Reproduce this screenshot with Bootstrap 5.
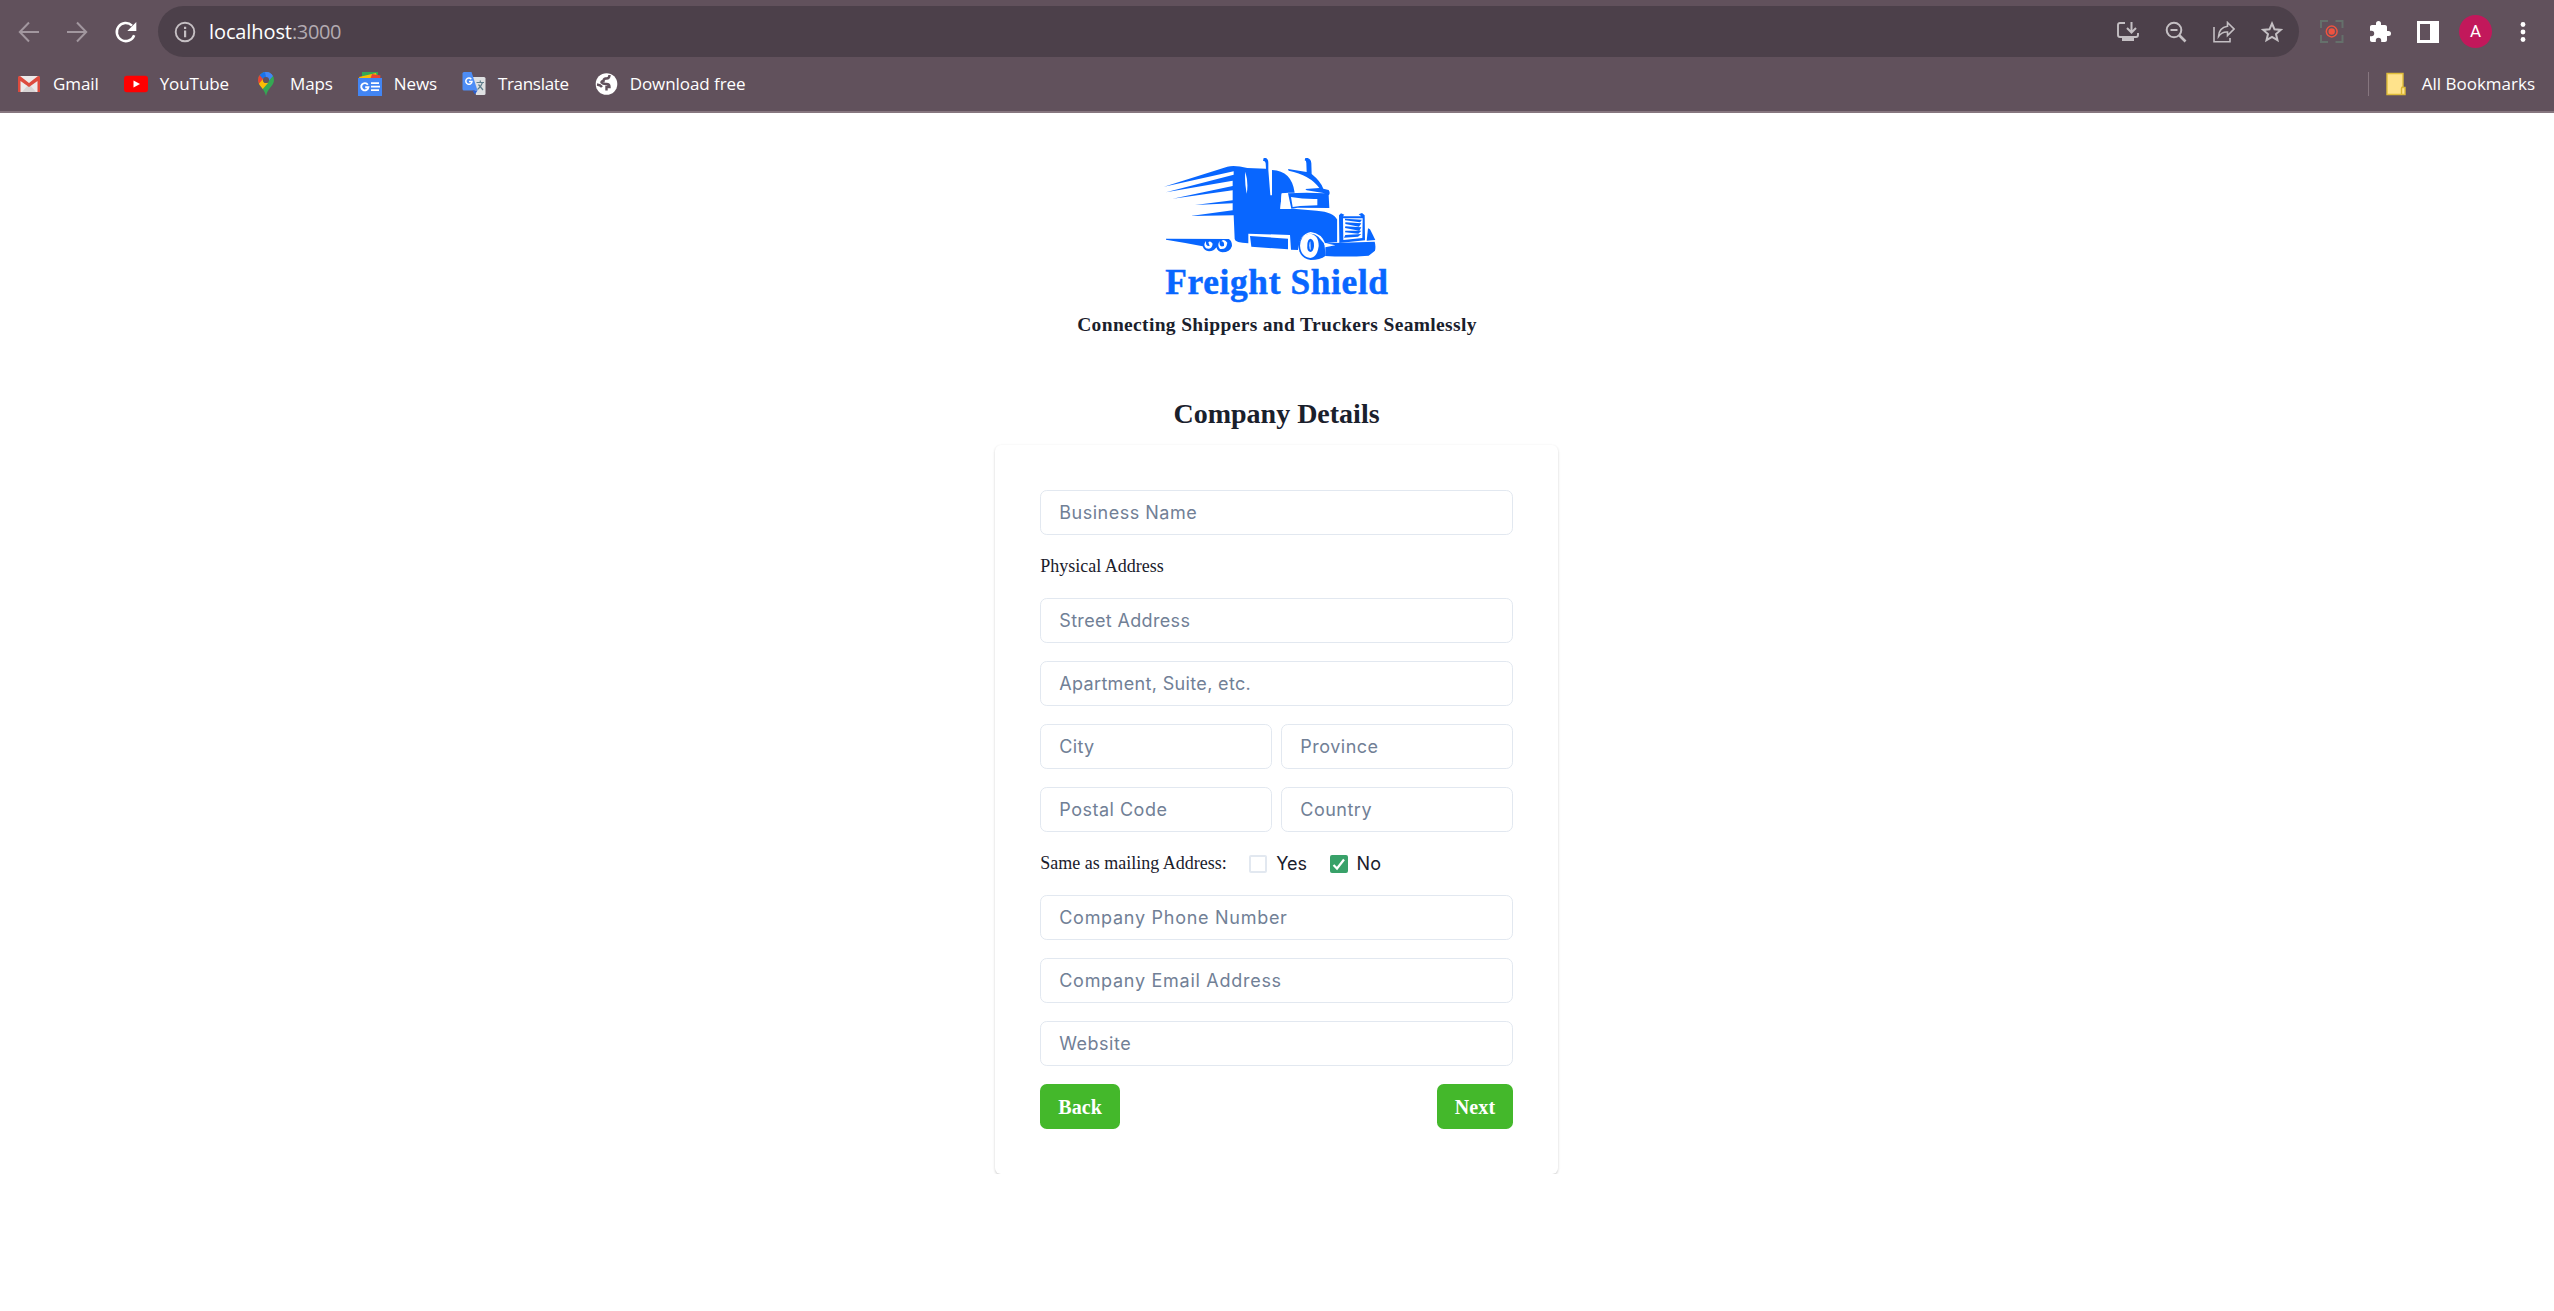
<!DOCTYPE html>
<html lang="en">
<head>
<meta charset="utf-8">
<title>Freight Shield</title>
<link href="https://cdn.jsdelivr.net/npm/bootstrap@5.3.0/dist/css/bootstrap.min.css" rel="stylesheet">
<style>
body{font-family:Inter,sans-serif;color:#1a202c;font-size:18px;line-height:27px;background:#fff}
svg{display:block;flex:none}
.chrome-top{height:113px;background:#61515c;border-bottom:2px solid #86767f;color:#fff;font-family:"Open Sans",sans-serif}
.tool-row{height:63px;padding-left:18px}
.nav-fwd{margin-left:26px}
.nav-reload{margin-left:26px}
.omni{height:51px;width:2141px;border-radius:26px;background:#4c404a;padding:0 16px 0 16px;margin-left:20px}
.omni-icons{gap:26px}
.url-txt{font-size:20px;color:#b3abb1;margin-left:13px;letter-spacing:-.35px}
.url-txt b{font-weight:400;color:#fff;letter-spacing:-.1px}
.ext-icons{margin-left:20px;gap:24px}
.avatar{width:33px;height:33px;background:#c2185b;font-size:17px;font-family:Roboto,sans-serif;margin:0 -5px}
.mark-row{height:41px;padding:0 19px 0 17px;font-size:17px;gap:24.8px}
.mark-item{gap:12px}
.mark-item span{letter-spacing:-.06px}
.mark-item .tight{letter-spacing:-.3px}
.bar-sep{width:1px;height:24px;background:#86767f;margin-right:1px}
.serif{font-family:"Liberation Serif",serif}
.logo-box{padding-top:27px;margin-left:-1px}
.tagline{font-size:19.5px;font-weight:700;line-height:24px;margin:3px 0 59px;letter-spacing:.34px}
.page-title{font-size:28px;font-weight:700;line-height:36px;margin:0 0 13px -1px}
.form-box{width:563px;padding:45px;margin-left:-.5px;border-radius:6px;background:#fff;box-shadow:0 1px 3px rgba(0,0,0,.12),0 1.5px 2px rgba(0,0,0,.08);gap:18px}
.form-box .form-control{height:45px;border:1px solid #e2e8f0;border-radius:6.75px;padding:0 18px;font-size:18px;color:#1a202c;letter-spacing:.34px}
.form-box .form-control::placeholder{color:#718096;opacity:1}
.form-box .form-control.track-1{letter-spacing:.5px}
.form-box .form-control.track-2{letter-spacing:.72px}
.pair{gap:9px}
.tick{width:18px;height:18px;border:2px solid #e2e8f0;border-radius:2px}
.tick.on{background:#38a169;border-color:#38a169}
.choice{gap:9px;margin-left:22.5px}
.form-box .go{height:45px;background:#44b82b;color:#fff;border:0;border-radius:6.75px;padding:0 18px;font-weight:700;font-size:20px;letter-spacing:.12px}
</style>
</head>
<body>
<header class="chrome-top">
 <div class="tool-row d-flex align-items-center">
  <svg width="22" height="22" viewBox="0 0 22 22" fill="none" stroke="#a2979f" stroke-width="2"><path d="M21 11H2.5M11 1.5L1.8 11L11 20.5"/></svg>
  <svg class="nav-fwd" width="22" height="22" viewBox="0 0 22 22" fill="none" stroke="#a2979f" stroke-width="2"><path d="M1 11H19.5M11 1.5L20.2 11L11 20.5"/></svg>
  <svg class="nav-reload" width="24" height="24" viewBox="0 0 24 24"><path d="M20.2 15.2A9 9 0 1 1 18 5.6" fill="none" stroke="#fff" stroke-width="2.5"/><path d="M22.3 2v9h-9z" fill="#fff"/></svg>
  <div class="omni d-flex align-items-center justify-content-between">
   <div class="d-flex align-items-center">
    <svg width="22" height="22" viewBox="0 0 22 22"><circle cx="11" cy="11" r="9.3" fill="none" stroke="#c5bfc3" stroke-width="1.9"/><path d="M10 5.7h2.2v2.2H10zM10 9.6h2.2v6.6H10z" fill="#c5bfc3"/></svg>
    <span class="url-txt"><b>localhost</b>:3000</span>
   </div>
   <div class="omni-icons d-flex align-items-center">
    <svg width="22" height="22" viewBox="0 0 22 22"><path d="M8 2H3Q1 2 1 4V14Q1 16 3 16H19Q21 16 21 14V12" fill="none" stroke="#c4bfc3" stroke-width="1.9"/><path d="M14.500 1V11M10 7L14.500 11.500L19 7" fill="none" stroke="#c4bfc3" stroke-width="2"/><path d="M5 16h12v4H5z" fill="#c4bfc3"/></svg>
    <svg width="22" height="22" viewBox="0 0 22 22" fill="none" stroke="#c4bfc3" stroke-width="2"><circle cx="9" cy="9" r="7.300"/><path d="M5.500 9H12.500"/><path d="M14 14L20.500 20.500" stroke-width="2.600"/></svg>
    <svg width="22" height="22" viewBox="0 0 22 22" fill="none" stroke="#c4bfc3" stroke-width="1.600"><path d="M1 6V20.700H17V17"/><path d="M14.500 1.500L21 8L14.500 14.500V11Q9 10.500 5.500 15.500Q6 6.500 14.500 5.200Z"/></svg>
    <svg width="22" height="22" viewBox="0 0 22 22" fill="none" stroke="#c4bfc3" stroke-width="2"><path d="M11 2.500L13.500 8.300L19.800 8.900L15 13L16.500 19.200L11 16L5.500 19.200L7 13L2.200 8.900L8.500 8.300Z"/></svg>
   </div>
  </div>
  <div class="ext-icons d-flex align-items-center">
   <svg width="25" height="25" viewBox="0 0 25 25" fill="none"><path d="M2 9V2H9M16.500 2H23.500V9M23.500 16V23H16.500M9 23H2V16" stroke="#65706b" stroke-width="2"/><circle cx="12.700" cy="12.500" r="5.400" stroke="#ee5340" stroke-width="1.500"/><circle cx="12.700" cy="12.500" r="3.200" fill="#ee5340"/></svg>
   <svg width="24" height="24" viewBox="0 0 24 24" fill="#fff"><path d="M20.500 11H19V7c0-1.100-.9-2-2-2h-4V3.500a2.500 2.500 0 0 0-5 0V5H4c-1.100 0-2 .9-2 2v3.800h1.500a2.700 2.700 0 0 1 0 5.400H2V20c0 1.100.9 2 2 2h3.800v-1.500a2.700 2.700 0 0 1 5.400 0V22H17c1.100 0 2-.9 2-2v-4h1.500a2.500 2.500 0 0 0 0-5z"/></svg>
   <svg width="24" height="24" viewBox="0 0 24 24"><path d="M1 1H23V23H1ZM4 4V20H14V4Z" fill="#fff" fill-rule="evenodd"/></svg>
   <span class="avatar rounded-circle d-flex align-items-center justify-content-center">A</span>
   <svg width="24" height="24" viewBox="0 0 24 24" fill="#fff"><circle cx="12" cy="4.500" r="2.400"/><circle cx="12" cy="12" r="2.400"/><circle cx="12" cy="19.500" r="2.400"/></svg>
  </div>
 </div>
 <div class="mark-row d-flex align-items-center">
  <div class="mark-item d-flex align-items-center">
   <svg width="24" height="24" viewBox="0 0 24 24"><path d="M2 4H22V20H2Z" fill="#eceaea"/><path d="M5 20L12 12L19 20Z" fill="#d8d4d4"/><path d="M1 5Q1 4 3 4L12 11L21 4Q23 4 23 5V20H20.500V9L12 15L3.500 9V20H1Z" fill="#dd4b3e"/></svg>
   <span>Gmail</span>
  </div>
  <div class="mark-item d-flex align-items-center">
   <svg width="24" height="24" viewBox="0 0 24 24"><rect y="3.800" width="24" height="16.500" rx="3" fill="#f00"/><path d="M9.500 8.500L16 12L9.500 15.500Z" fill="#fff"/></svg>
   <span>YouTube</span>
  </div>
  <div class="mark-item d-flex align-items-center">
   <svg width="24" height="24" viewBox="0 0 24 24"><defs><clipPath id="pin"><path d="M12 0A8 8 0 0 1 20 8C20 14 14 15.500 12 24C10 15.500 4 14 4 8A8 8 0 0 1 12 0Z"/></clipPath></defs><g clip-path="url(#pin)"><path d="M0 0H24V24H0Z" fill="#34a853"/><path d="M9 0H24L11 9Z" fill="#4285f4"/><path d="M10 0H16L19 4L5 20L12 9Z" fill="#4285f4"/><path d="M0 0H5L13 7L5 14H0Z" fill="#ea4335"/><path d="M5 0H11L12 5L9 7L5.500 3Z" fill="#1a73e8"/><path d="M3 14L10 6L14 11L7 19Z" fill="#fbbc04"/></g><circle cx="12" cy="8" r="3.100" fill="#61515c"/></svg>
   <span>Maps</span>
  </div>
  <div class="mark-item d-flex align-items-center">
   <svg width="24" height="24" viewBox="0 0 24 24"><path d="M4 0H20V8H4Z" fill="#34a853"/><path d="M1 5L18 1L20 8H2Z" fill="#fbbc04"/><path d="M14 2L22.500 3.500L22 8H12Z" fill="#ea4335"/><path d="M0 6H24V24H0Z" fill="#4285f4"/><path d="M9.800 12.700A3.600 3.600 0 1 0 10.400 15.300H7.200" fill="none" stroke="#fff" stroke-width="1.900"/><path d="M13 11.200H21M13 14.700H22M13 18.200H21" stroke="#fff" stroke-width="1.700"/></svg>
   <span>News</span>
  </div>
  <div class="mark-item d-flex align-items-center">
   <svg width="24" height="24" viewBox="0 0 24 24"><path d="M9 5H22Q23.500 5 23.500 6.500V21.500Q23.500 23 22 23H14Z" fill="#dfe1e3"/><path d="M14.500 10.500H22M18.300 8.500V10.500M20.500 10.500Q19 15 15.500 17.500M16.500 12.500L21 18" fill="none" stroke="#5f7e8c" stroke-width="1.200"/><path d="M2 0H9.500L15.500 18.500H2Q.5 18.500 .5 17V1.500Q.5 0 2 0Z" fill="#4d8df6"/><path d="M10.500 18.500H15.500L13 22.500Z" fill="#2a5fd0"/><path d="M9.300 7.200A3.100 3.100 0 1 0 10 9.500H7" fill="none" stroke="#fff" stroke-width="1.500"/></svg>
   <span class="tight">Translate</span>
  </div>
  <div class="mark-item d-flex align-items-center">
   <svg width="24" height="24" viewBox="0 0 24 24"><circle cx="12.500" cy="12" r="10.800" fill="#fff"/><path d="M15.500 3Q15.500 6.500 12.500 6.500H11.500Q9.500 7 9.500 9Q7.500 9 7.500 10.500Q9 12.200 12.500 12Q15.500 12 15.500 15H12.500V18.500M3 12.500Q6.500 13 8 15" fill="none" stroke="#61515c" stroke-width="2.400"/></svg>
   <span>Download free</span>
  </div>
  <div class="d-flex align-items-center ms-auto">
   <span class="bar-sep"></span>
   <svg class="ms-3" width="20" height="24" viewBox="0 0 20 24"><path d="M1 1.500H17V15.500H19V22.500H1Z" fill="#ffe38c" stroke="#dfbd3a" stroke-width="1.400"/><path d="M15.500 22V16.500Q15.500 15 17 15" fill="none" stroke="#d9b52f" stroke-width="1.400"/></svg>
   <span class="ms-3">All Bookmarks</span>
  </div>
 </div>
</header>

<main class="d-flex flex-column align-items-center">
 <div class="logo-box">
  <svg width="274" height="170" viewBox="0 0 822 510" fill="#0866ff">
   <path d="M72 140L262 80Q285 75 322 84L378 86L377 70Q377 63 369 62L371 54L378 54Q385 57 385 68V90L391 166H396V90Q455 92 464 158L446 158L425 160L421 207H452L460 206L530 212Q582 216 592 240V308L556 311Q545 280 512 276Q478 282 474 330L453 329L450 285L325 281V310Q285 308 284 297L281 226L152 228L278 211V190L165 195L278 181V151L98 176L278 138V122L78 157L281 104V94Z"/>
   <path d="M316 95Q326 128 320 161Q313 125 316 95ZM425 161L446 160Q452 185 452 206L421 207Z" fill="#fff"/>
   <path d="M444 87L500 96L499 69Q499 62 494 61L496 54L503 54Q513 57 514 70L515 102Q542 124 550 146L566 150Q572 160 566 166L568 204L473 203L454 206L444 160L500 158L555 160L500 151L496 147L538 144Q510 105 446 92Z"/>
   <path d="M453 171Q490 178 532 177V196L480 198L458 201Z" fill="#fff"/>
   <path d="M330 288L444 296V328L334 320Z"/>
   <path d="M78 296L266 297Q276 302 276 318Q270 337 247 337Q233 335 229 322Q222 334 207 334Q192 332 188 319Q130 307 78 299Z"/>
   <path d="M198 303Q188 315 198 325Q216 330 218 311Q210 300 205 307L209 318Q196 320 198 303ZM239 303Q230 316 240 327Q259 330 262 308Q252 295 244 304Q254 304 252 318Q236 324 239 303Z" fill="#fff"/>
   <path d="M474 312L478 334Q486 356 512 360Q540 360 557 347L553 311L535 290Q510 270 482 297Z"/>
   <path d="M508 281Q536 282 536 318Q532 352 511 354Q482 350 480 317Q482 283 508 281Z" fill="#fff"/>
   <path d="M511 296Q523 298 522 318Q521 335 511 336Q500 334 502 316Q502 298 511 296Z"/>
   <path d="M511 304L512 330Q508 327 508 317Q508 306 511 304Z" fill="#fff"/>
   <path d="M597 226L603 220L613 224L609 229H664L656 223L666 219L674 226L675 301L598 309Z"/>
   <path d="M609 235H668L667 294L610 300Z" fill="#fff"/>
   <path d="M615 236L666 239L660 247L615 241ZM616 247L664 250L657 260L616 252ZM616 259L664 262L658 272L615 264ZM616 272L664 272L655 281L615 277ZM616 285L664 282L654 290L612 293Z"/>
   <path d="M594 240V308L552 312" fill="none" stroke="#fff" stroke-width="4"/>
   <path d="M558 310L704 305Q708 318 705 332L686 347Q620 352 556 348V322L586 316Z"/>
   <path d="M684 265L690 268L706 300L680 302Z"/>
   <text x="76" y="461" stroke="#0866ff" stroke-width="1.500" font-family="'Liberation Serif',serif" font-weight="700" font-size="106" textLength="668" lengthAdjust="spacing">Freight Shield</text>
  </svg>
 </div>
 <p class="serif tagline">Connecting Shippers and Truckers Seamlessly</p>
 <h1 class="serif page-title">Company Details</h1>
 <form class="form-box d-flex flex-column">
  <input class="form-control track-1" placeholder="Business Name">
  <div class="serif">Physical Address</div>
  <input class="form-control" placeholder="Street Address">
  <input class="form-control" placeholder="Apartment, Suite, etc.">
  <div class="pair d-flex"><input class="form-control" placeholder="City"><input class="form-control track-1" placeholder="Province"></div>
  <div class="pair d-flex"><input class="form-control track-1" placeholder="Postal Code"><input class="form-control track-1" placeholder="Country"></div>
  <div class="d-flex align-items-center">
   <span class="serif">Same as mailing Address:</span>
   <label class="choice d-flex align-items-center"><span class="tick"></span><span>Yes</span></label>
   <label class="choice d-flex align-items-center"><span class="tick on"><svg width="14" height="14" viewBox="0 0 14 14" fill="none" stroke="#fff" stroke-width="2.200"><path d="M1.500 8L5 11.500L12 2.500"/></svg></span><span>No</span></label>
  </div>
  <input class="form-control track-2" placeholder="Company Phone Number">
  <input class="form-control track-2" placeholder="Company Email Address">
  <input class="form-control track-1" placeholder="Website">
  <div class="d-flex justify-content-between">
   <button type="button" class="btn go serif">Back</button>
   <button type="button" class="btn go serif">Next</button>
  </div>
 </form>
</main>
<script src="https://cdn.jsdelivr.net/npm/bootstrap@5.3.0/dist/js/bootstrap.bundle.min.js"></script>
</body>
</html>
